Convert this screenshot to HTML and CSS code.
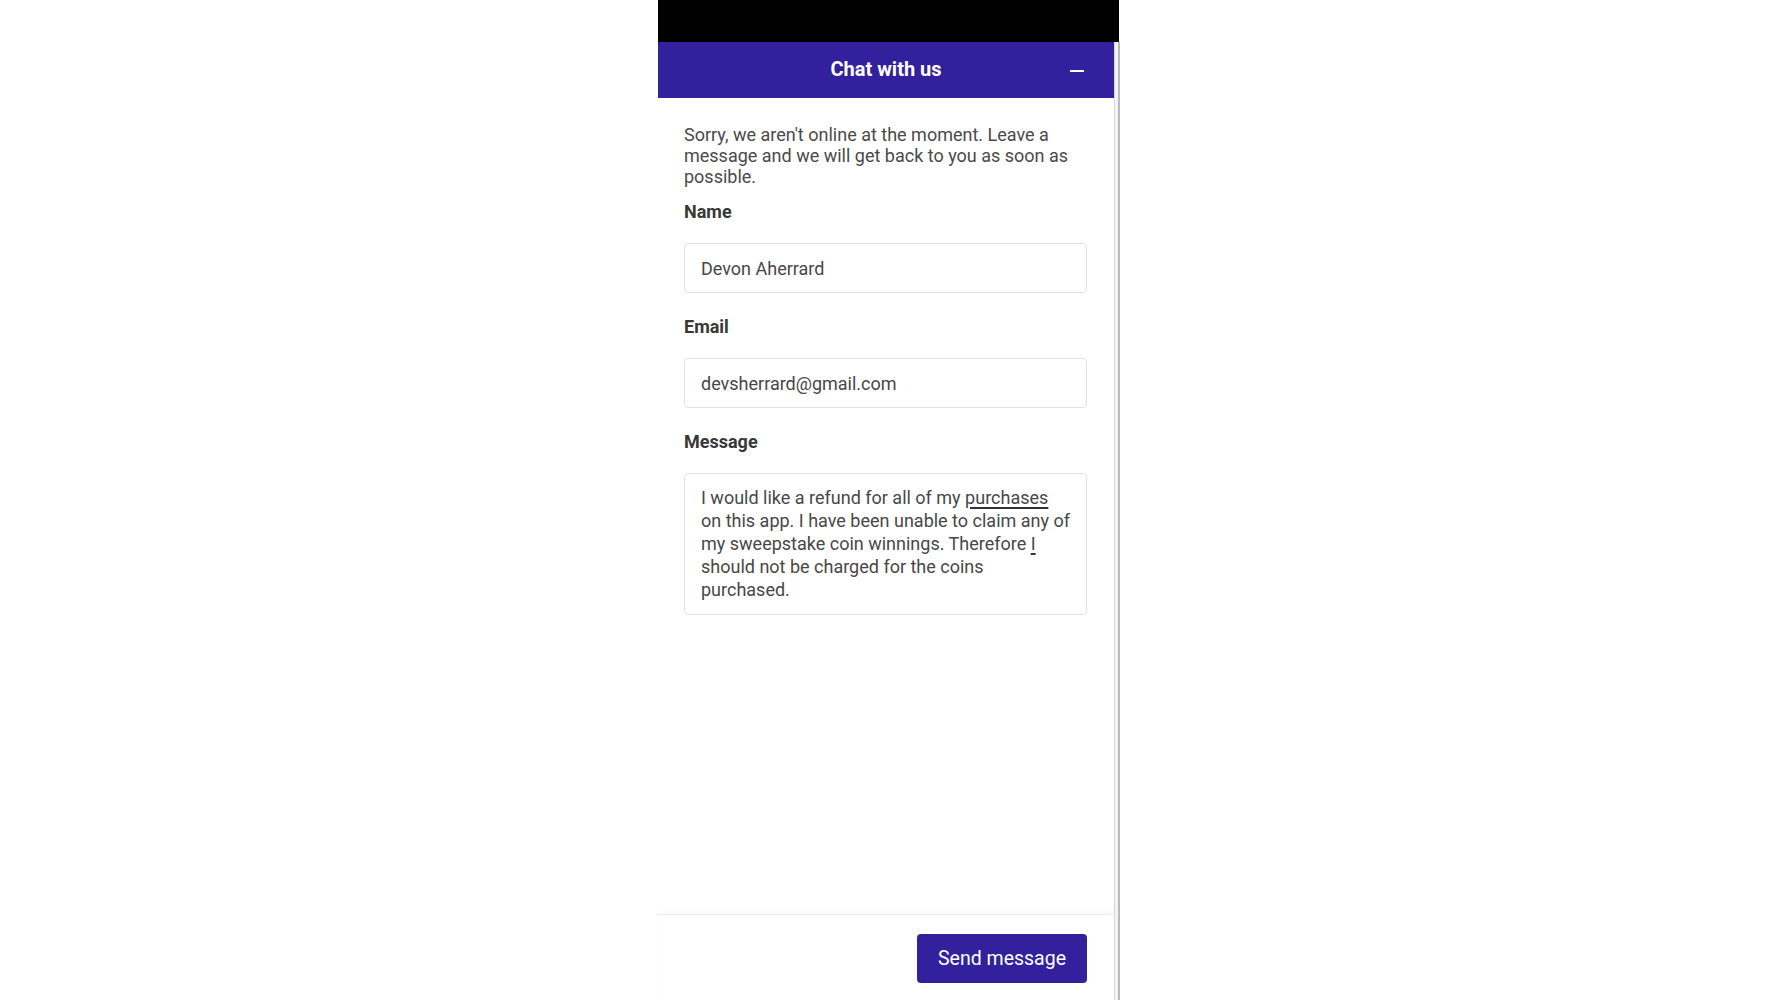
FILE: index.html
```html
<!DOCTYPE html>
<html lang="en">
<head>
<meta charset="utf-8">
<title>Chat with us</title>
<link rel="stylesheet" href="styles.css">
</head>
<body>
<div class="phone">
  <div class="statusbar"></div>
  <div class="frame">
    <div class="widget">
      <header class="chat-header">
        <h1 class="chat-title">Chat with us</h1>
        <button class="minimize" aria-label="Minimize"><span class="minus"></span></button>
      </header>
      <main class="chat-body">
        <p class="intro">Sorry, we aren't online at the moment. Leave a message and we will get back to you as soon as possible.</p>
        <div class="field">
          <label class="label">Name</label>
          <div class="input">Devon Aherrard</div>
        </div>
        <div class="field">
          <label class="label">Email</label>
          <div class="input">devsherrard@gmail.com</div>
        </div>
        <div class="field">
          <label class="label">Message</label>
          <div class="textarea">I would like a refund for all of my <span class="compose">purchases</span><br>on this app. I have been unable to claim any of<br>my sweepstake coin winnings. Therefore <span class="compose">I</span><br>should not be charged for the coins<br>purchased.</div>
        </div>
      </main>
      <footer class="chat-footer">
        <button class="send">Send message</button>
      </footer>
    </div>
    <div class="scrollbar"></div>
  </div>
</div>
</body>
</html>
```

FILE: styles.css
```css
html, body {
  margin: 0;
  padding: 0;
  background: #ffffff;
}

body {
  font-family: Roboto, "Noto Sans", "Liberation Sans", sans-serif;
  height: 1000px;
  overflow: hidden;
}

.phone {
  width: 461px;
  height: 1000px;
  margin-left: calc(50% - 231px);
  display: flex;
  flex-direction: column;
}

.statusbar {
  height: 42px;
  background: #000000;
  flex: none;
}

.frame {
  flex: 1;
  display: flex;
  min-height: 0;
}

.widget {
  flex: 1;
  display: flex;
  flex-direction: column;
  background: #ffffff;
}

.scrollbar {
  width: 3px;
  flex: none;
  background: #f3f3f6;
  border-left: 1px solid #d6d6dc;
  border-right: 2px solid #b9b9bf;
}

.chat-header {
  height: 56px;
  flex: none;
  background: #33209d;
  display: flex;
  align-items: center;
  justify-content: center;
  position: relative;
}

.chat-title {
  margin: 0;
  color: #ffffff;
  font-size: 20px;
  font-weight: 700;
  line-height: 24px;
  position: relative;
  top: -1px;
}

.minimize {
  position: absolute;
  right: 30px;
  top: 27px;
  width: 14px;
  height: 4px;
  padding: 0;
  border: none;
  background: transparent;
}

.minus {
  display: block;
  width: 14px;
  height: 2px;
  background: #ffffff;
}

.chat-body {
  flex: 1;
  padding: 26px 27px 0 26px;
  display: flex;
  flex-direction: column;
  gap: 23px;
}

.intro {
  margin: 0 0 -9px 0;
  font-size: 18px;
  line-height: 21px;
  color: #4a4a4a;
}

.field {
  display: flex;
  flex-direction: column;
  gap: 21px;
}

.label {
  font-size: 18px;
  line-height: 21px;
  font-weight: 700;
  color: #383838;
}

.input {
  height: 48px;
  border: 1px solid #e2e2e2;
  border-radius: 4px;
  padding: 0 16px;
  display: flex;
  align-items: center;
  font-size: 18px;
  color: #474747;
}

.textarea {
  border: 1px solid #e2e2e2;
  border-radius: 4px;
  padding: 12px 16px 13px 16px;
  font-size: 18px;
  line-height: 23px;
  color: #474747;
  white-space: nowrap;
}

.compose {
  text-decoration: underline;
  text-decoration-thickness: 1.5px;
  text-underline-offset: 3px;
  text-decoration-color: #333333;
}

.chat-footer {
  height: 86px;
  flex: none;
  border-top: 1px solid #ececf0;
  box-shadow: 0 -3px 5px rgba(0, 0, 0, 0.025);
  display: flex;
  justify-content: flex-end;
  align-items: flex-start;
  padding: 19px 27px 0 0;
  box-sizing: border-box;
}

.send {
  height: 49px;
  padding: 0 21px;
  background: #33209d;
  color: #ffffff;
  border: none;
  border-radius: 4px;
  font-family: Roboto, "Noto Sans", "Liberation Sans", sans-serif;
  font-size: 19.5px;
  line-height: 49px;
}
```
